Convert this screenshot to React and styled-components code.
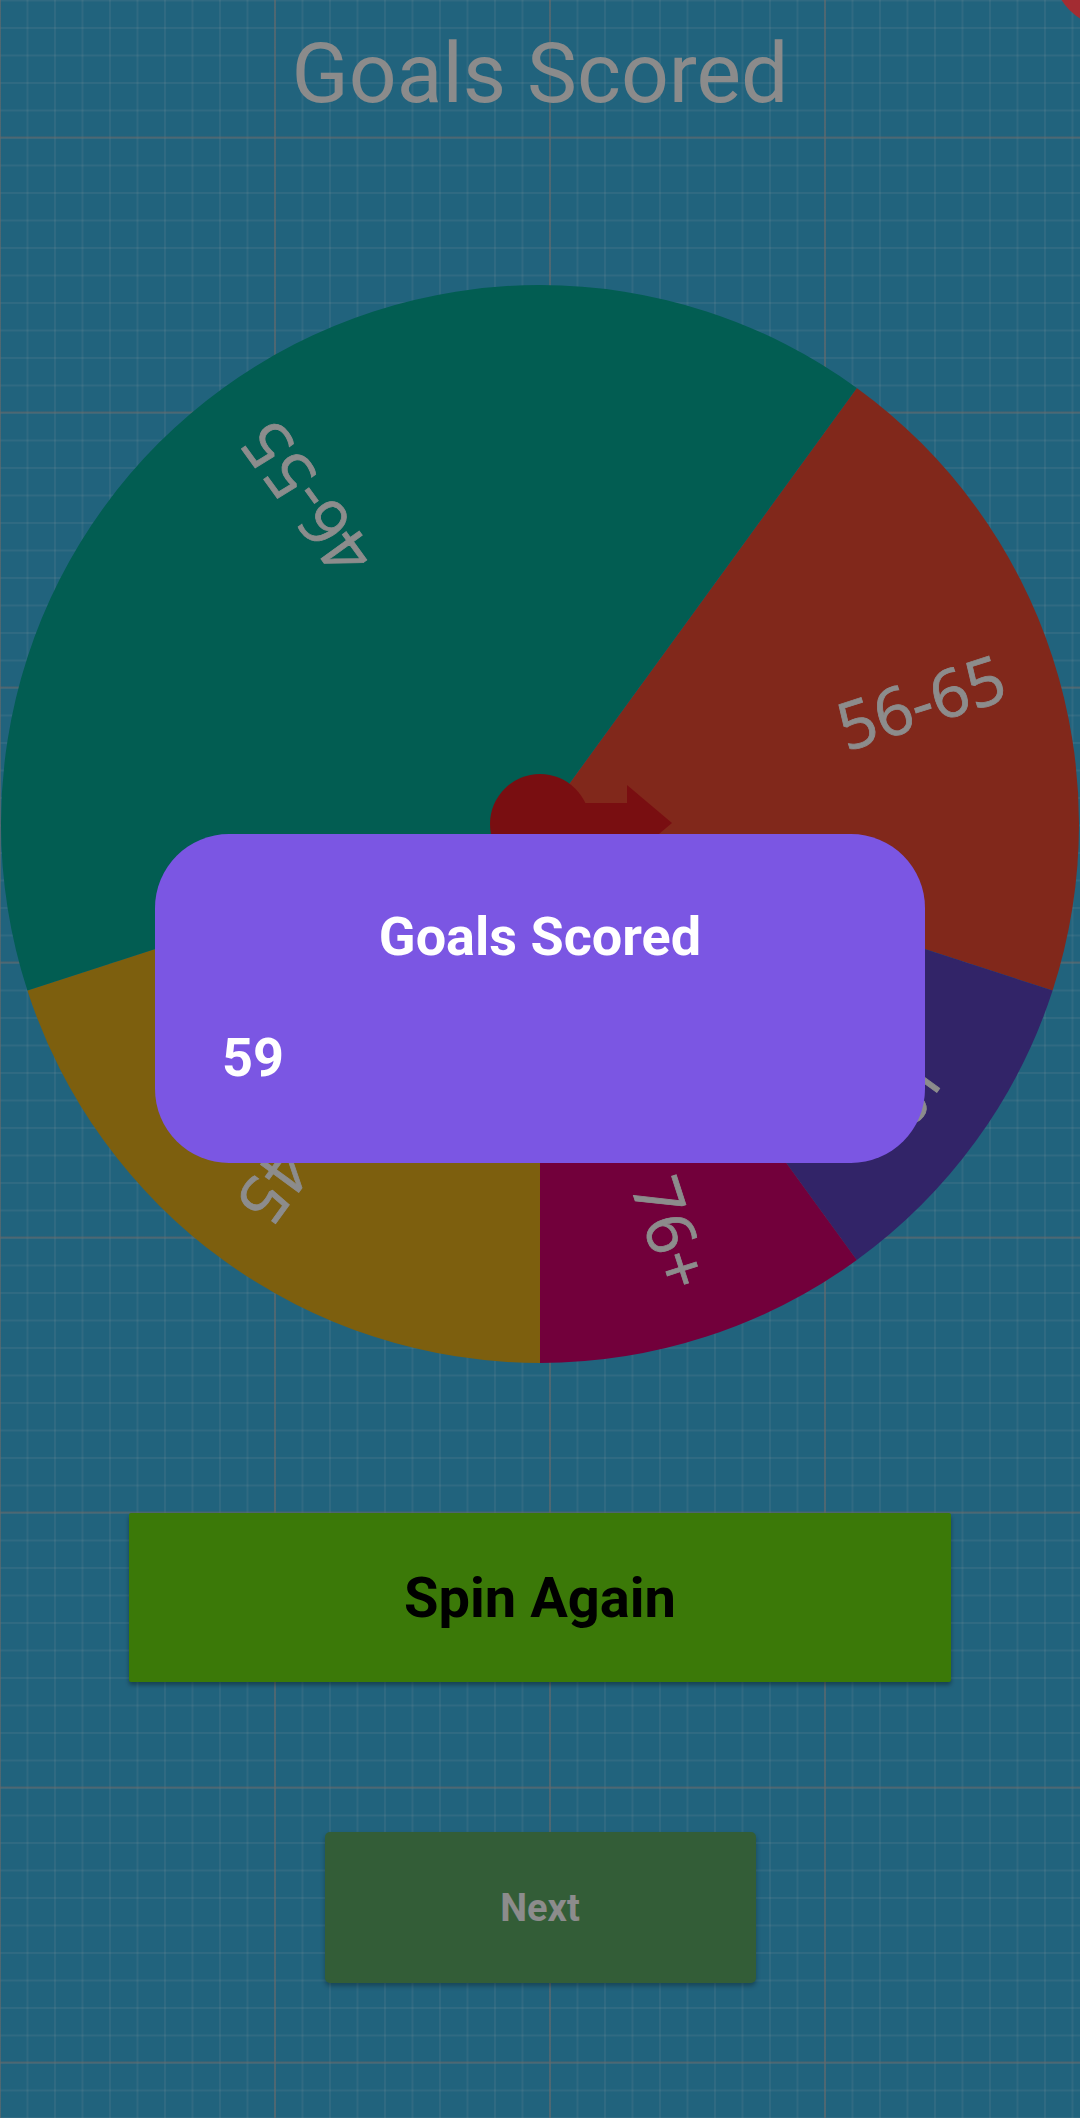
import React from "react";
import styled, { createGlobalStyle } from "styled-components";

const GlobalStyle = createGlobalStyle`
  html, body { margin: 0; padding: 0; }
  body {
    width: 1080px;
    height: 2118px;
    overflow: hidden;
    font-family: Roboto, "Noto Sans", sans-serif;
  }
`;

const Screen = styled.div`
  position: relative;
  width: 1080px;
  height: 2118px;
  overflow: hidden;
  display: flex;
  flex-direction: column;
  align-items: center;
  background-color: #3292b9;
  background-image:
    linear-gradient(to right, rgba(150, 150, 150, 0.55) 2px, transparent 2px),
    linear-gradient(to bottom, rgba(150, 150, 150, 0.55) 2px, transparent 2px),
    linear-gradient(to right, rgba(255, 255, 255, 0.1) 2px, transparent 2px),
    linear-gradient(to bottom, rgba(255, 255, 255, 0.1) 2px, transparent 2px);
  background-size: 275px 100%, 100% 275px, 27.5px 100%, 100% 27.5px;
  background-position: -1px 0, 0 136.5px, -1px 0, 0 -0.5px;
`;

const CornerBlob = styled.div`
  position: absolute;
  top: -87px;
  left: 1053px;
  width: 114px;
  height: 114px;
  border-radius: 50%;
  background: #f0424a;
`;

const Title = styled.h1`
  margin: 24px 0 0;
  height: 100px;
  line-height: 100px;
  font-family: Roboto, sans-serif;
  font-size: 84px;
  font-weight: 400;
  color: #cdcdcd;
  white-space: nowrap;
`;

const WheelSvg = styled.svg`
  display: block;
  margin-top: 160px;
  width: 1080px;
  height: 1080px;
  flex-shrink: 0;
`;

const Segment = styled.path`
  stroke: none;
`;

const SegmentLabel = styled.text`
  font-family: "Open Sans", "DejaVu Sans", sans-serif;
  font-size: 66px;
  font-weight: 500;
  fill: #cfcfcf;
  stroke: #cfcfcf;
  stroke-width: 0.8px;
`;

const Pointer = styled.g`
  fill: #b3151a;
`;

const SpinButton = styled.button`
  margin-top: 149px;
  width: 822px;
  height: 169px;
  flex-shrink: 0;
  border: none;
  border-radius: 2px;
  background: #57b30c;
  box-shadow: 0 3px 4px rgba(0, 0, 0, 0.35);
  font-family: Roboto, sans-serif;
  font-size: 56px;
  font-weight: 700;
  color: #000;
  padding: 0;
`;

const NextButton = styled.button`
  margin-top: 150px;
  width: 431px;
  height: 151px;
  flex-shrink: 0;
  border: none;
  border-radius: 5px;
  background: #4c8a52;
  box-shadow: 0 3px 5px rgba(0, 0, 0, 0.3);
  font-family: Roboto, sans-serif;
  font-size: 38px;
  font-weight: 700;
  color: #cecece;
  padding: 0;
`;

const Scrim = styled.div`
  position: absolute;
  inset: 0;
  box-sizing: border-box;
  padding-top: 834px;
  display: flex;
  justify-content: center;
  align-items: flex-start;
  background: rgba(0, 0, 0, 0.32);
`;

const Dialog = styled.div`
  box-sizing: border-box;
  width: 770px;
  height: 329px;
  padding: 71px 67px 0;
  border-radius: 74px;
  background: #7b56e3;
  display: flex;
  flex-direction: column;
  color: #fff;
  font-family: Roboto, sans-serif;
`;

const DialogTitle = styled.h2`
  margin: 0;
  font-size: 54px;
  line-height: 63px;
  font-weight: 700;
  text-align: center;
`;

const DialogMessage = styled.p`
  margin: 58px 0 0;
  font-size: 54px;
  line-height: 63px;
  font-weight: 700;
`;

const SEGMENTS = [
  { label: "56-65", from: 36, to: 108, color: "#bf3b28" },
  { label: "66-75", from: 108, to: 144, color: "#4a359a" },
  { label: "76+", from: 144, to: 180, color: "#a90058" },
  { label: "36-45", from: 180, to: 252, color: "#b88c16" },
  { label: "46-55", from: 252, to: 396, color: "#038a79" },
];

const C = 540;
const R = 539;

const pt = (deg, r) => {
  const a = (deg * Math.PI) / 180;
  return [C + r * Math.sin(a), C - r * Math.cos(a)];
};

const arcPath = (from, to) => {
  const [x1, y1] = pt(from, R);
  const [x2, y2] = pt(to, R);
  const large = to - from > 180 ? 1 : 0;
  return `M ${C} ${C} L ${x1} ${y1} A ${R} ${R} 0 ${large} 1 ${x2} ${y2} Z`;
};

function Wheel() {
  return (
    <WheelSvg viewBox="0 0 1080 1080">
      {SEGMENTS.map((s) => (
        <Segment key={s.label} d={arcPath(s.from, s.to)} fill={s.color} />
      ))}
      {SEGMENTS.map((s) => {
        const mid = (s.from + s.to) / 2;
        const [x, y] = pt(mid, 486);
        return (
          <SegmentLabel
            key={`l-${s.label}`}
            x={0}
            y={0}
            textAnchor="end"
            dominantBaseline="central"
            transform={`translate(${x} ${y}) rotate(${mid - 90})`}
          >
            {s.label}
          </SegmentLabel>
        );
      })}
      <Pointer>
        <circle cx={C} cy={C} r={50} />
        <rect x={C} y={C - 21} width={87} height={41} />
        <polygon points={`${C + 87},${C - 39} ${C + 132},${C - 1} ${C + 87},${C + 37}`} />
      </Pointer>
    </WheelSvg>
  );
}

export default function App() {
  return (
    <>
      <GlobalStyle />
      <Screen>
        <CornerBlob />
        <Title>Goals Scored</Title>
        <Wheel />
        <SpinButton>Spin Again</SpinButton>
        <NextButton>Next</NextButton>
        <Scrim>
          <Dialog>
            <DialogTitle>Goals Scored</DialogTitle>
            <DialogMessage>59</DialogMessage>
          </Dialog>
        </Scrim>
      </Screen>
    </>
  );
}
